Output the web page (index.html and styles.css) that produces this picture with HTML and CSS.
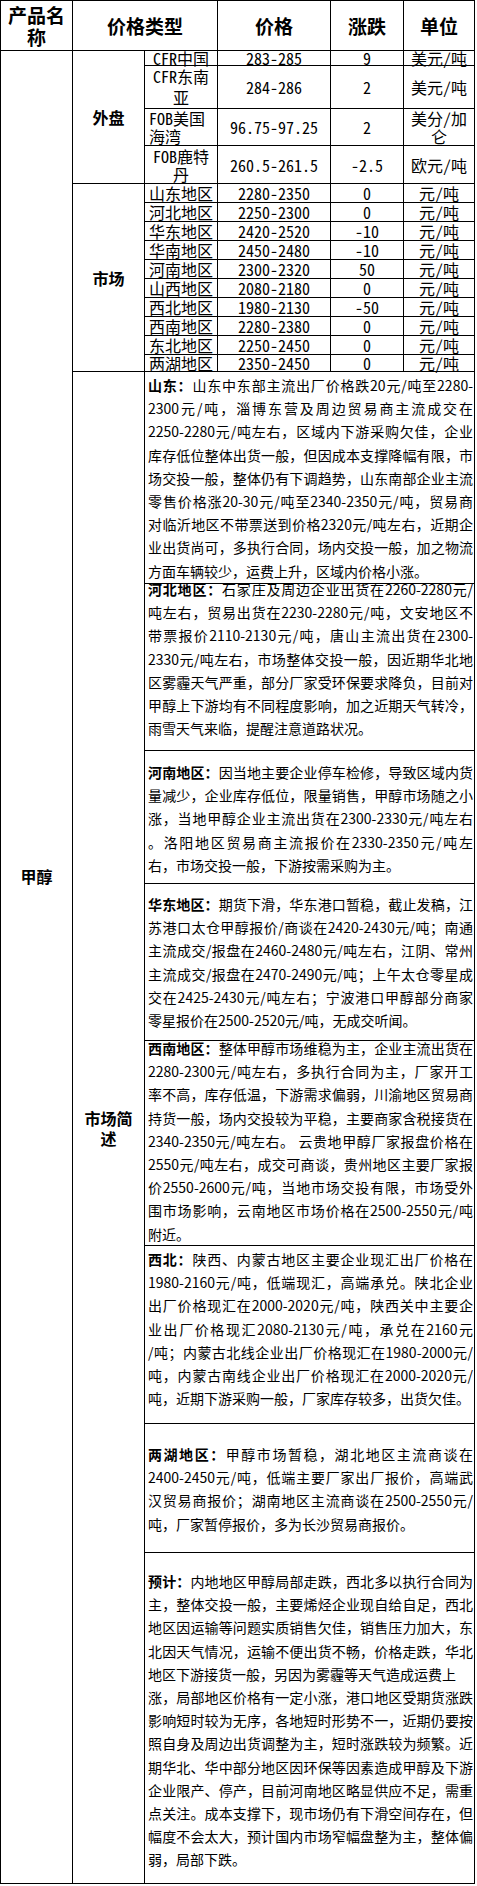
FILE: index.html
```html
<!DOCTYPE html>
<html lang="zh-CN">
<head>
<meta charset="utf-8">
<title>甲醇价格</title>
<link rel="stylesheet" href="styles.css">
</head>
<body>
<table class="grid">
  <colgroup>
    <col class="c1"><col class="c2"><col class="c3"><col class="c4"><col class="c5"><col class="c6">
  </colgroup>
  <tr class="h-head">
    <th>产品名称</th>
    <th colspan="2">价格类型</th>
    <th>价格</th>
    <th>涨跌</th>
    <th>单位</th>
  </tr>
  <tr class="h-r1 tight">
    <td rowspan="22" class="prod">甲醇</td>
    <td rowspan="4" class="lbl">外盘</td>
    <td class="dat">CFR中国</td><td class="dat">283-285</td><td class="dat">9</td><td class="dat">美元/吨</td>
  </tr>
  <tr class="h-r2">
    <td class="dat wide">CFR东南亚</td><td class="dat">284-286</td><td class="dat">2</td><td class="dat">美元/吨</td>
  </tr>
  <tr class="h-r3">
    <td class="dat left">FOB美国海湾</td><td class="dat">96.75-97.25</td><td class="dat">2</td><td class="dat">美分/加仑</td>
  </tr>
  <tr class="h-r4">
    <td class="dat">FOB鹿特丹</td><td class="dat">260.5-261.5</td><td class="dat">-2.5</td><td class="dat">欧元/吨</td>
  </tr>
  <tr class="h-m">
    <td rowspan="10" class="lbl">市场</td>
    <td class="dat">山东地区</td><td class="dat">2280-2350</td><td class="dat">0</td><td class="dat">元/吨</td>
  </tr>
  <tr class="h-m"><td class="dat">河北地区</td><td class="dat">2250-2300</td><td class="dat">0</td><td class="dat">元/吨</td></tr>
  <tr class="h-m"><td class="dat">华东地区</td><td class="dat">2420-2520</td><td class="dat">-10</td><td class="dat">元/吨</td></tr>
  <tr class="h-m"><td class="dat">华南地区</td><td class="dat">2450-2480</td><td class="dat">-10</td><td class="dat">元/吨</td></tr>
  <tr class="h-m"><td class="dat">河南地区</td><td class="dat">2300-2320</td><td class="dat">50</td><td class="dat">元/吨</td></tr>
  <tr class="h-m"><td class="dat">山西地区</td><td class="dat">2080-2180</td><td class="dat">0</td><td class="dat">元/吨</td></tr>
  <tr class="h-m"><td class="dat">西北地区</td><td class="dat">1980-2130</td><td class="dat">-50</td><td class="dat">元/吨</td></tr>
  <tr class="h-m"><td class="dat">西南地区</td><td class="dat">2280-2380</td><td class="dat">0</td><td class="dat">元/吨</td></tr>
  <tr class="h-m"><td class="dat">东北地区</td><td class="dat">2250-2450</td><td class="dat">0</td><td class="dat">元/吨</td></tr>
  <tr class="h-mlast"><td class="dat">两湖地区</td><td class="dat">2350-2450</td><td class="dat">0</td><td class="dat">元/吨</td></tr>

  <tr class="h-sd">
    <td rowspan="8" class="lbl">市场简述</td>
    <td colspan="4" class="note n-sd"><p class="para">
      <span class="ln"><b>山东：</b>山东中东部主流出厂价格跌20元/吨至2280-</span>
      <span class="ln">2300元/吨，淄博东营及周边贸易商主流成交在</span>
      <span class="ln">2250-2280元/吨左右，区域内下游采购欠佳，企业</span>
      <span class="ln">库存低位整体出货一般，但因成本支撑降幅有限，市</span>
      <span class="ln">场交投一般，整体仍有下调趋势，山东南部企业主流</span>
      <span class="ln">零售价格涨20-30元/吨至2340-2350元/吨，贸易商</span>
      <span class="ln">对临沂地区不带票送到价格2320元/吨左右，近期企</span>
      <span class="ln">业出货尚可，多执行合同，场内交投一般，加之物流</span>
      <span class="ln end">方面车辆较少，运费上升，区域内价格小涨。</span>
    </p></td>
  </tr>
  <tr class="h-hb">
    <td colspan="4" class="note n-hb"><p class="para">
      <span class="ln"><b>河北地区：</b>石家庄及周边企业出货在2260-2280元/</span>
      <span class="ln">吨左右，贸易出货在2230-2280元/吨，文安地区不</span>
      <span class="ln">带票报价2110-2130元/吨，唐山主流出货在2300-</span>
      <span class="ln">2330元/吨左右，市场整体交投一般，因近期华北地</span>
      <span class="ln">区雾霾天气严重，部分厂家受环保要求降负，目前对</span>
      <span class="ln">甲醇上下游均有不同程度影响，加之近期天气转冷，</span>
      <span class="ln end">雨雪天气来临，提醒注意道路状况。</span>
    </p></td>
  </tr>
  <tr class="h-hn">
    <td colspan="4" class="note n-hn"><p class="para">
      <span class="ln"><b>河南地区：</b>因当地主要企业停车检修，导致区域内货</span>
      <span class="ln">量减少，企业库存低位，限量销售，甲醇市场随之小</span>
      <span class="ln">涨，当地甲醇企业主流出货在2300-2330元/吨左右</span>
      <span class="ln">。洛阳地区贸易商主流报价在2330-2350元/吨左</span>
      <span class="ln end">右，市场交投一般，下游按需采购为主。</span>
    </p></td>
  </tr>
  <tr class="h-hd">
    <td colspan="4" class="note n-hd"><p class="para">
      <span class="ln"><b>华东地区：</b>期货下滑，华东港口暂稳，截止发稿，江</span>
      <span class="ln">苏港口太仓甲醇报价/商谈在2420-2430元/吨；南通</span>
      <span class="ln">主流成交/报盘在2460-2480元/吨左右，江阴、常州</span>
      <span class="ln">主流成交/报盘在2470-2490元/吨；上午太仓零星成</span>
      <span class="ln">交在2425-2430元/吨左右；宁波港口甲醇部分商家</span>
      <span class="ln end">零星报价在2500-2520元/吨，无成交听闻。</span>
    </p></td>
  </tr>
  <tr class="h-xn">
    <td colspan="4" class="note n-xn"><p class="para">
      <span class="ln"><b>西南地区：</b>整体甲醇市场维稳为主，企业主流出货在</span>
      <span class="ln">2280-2300元/吨左右，多执行合同为主，厂家开工</span>
      <span class="ln">率不高，库存低温，下游需求偏弱，川渝地区贸易商</span>
      <span class="ln">持货一般，场内交投较为平稳，主要商家含税接货在</span>
      <span class="ln">2340-2350元/吨左右。 云贵地甲醇厂家报盘价格在</span>
      <span class="ln">2550元/吨左右，成交可商谈，贵州地区主要厂家报</span>
      <span class="ln">价2550-2600元/吨，当地市场交投有限，市场受外</span>
      <span class="ln">围市场影响，云南地区市场价格在2500-2550元/吨</span>
      <span class="ln end">附近。</span>
    </p></td>
  </tr>
  <tr class="h-xb">
    <td colspan="4" class="note n-xb"><p class="para">
      <span class="ln"><b>西北：</b>陕西、内蒙古地区主要企业现汇出厂价格在</span>
      <span class="ln">1980-2160元/吨，低端现汇，高端承兑。陕北企业</span>
      <span class="ln">出厂价格现汇在2000-2020元/吨，陕西关中主要企</span>
      <span class="ln">业出厂价格现汇2080-2130元/吨，承兑在2160元</span>
      <span class="ln">/吨；内蒙古北线企业出厂价格现汇在1980-2000元/</span>
      <span class="ln">吨，内蒙古南线企业出厂价格现汇在2000-2020元/</span>
      <span class="ln end">吨，近期下游采购一般，厂家库存较多，出货欠佳。</span>
    </p></td>
  </tr>
  <tr class="h-lh">
    <td colspan="4" class="note n-lh"><p class="para">
      <span class="ln"><b>两湖地区：</b>甲醇市场暂稳，湖北地区主流商谈在</span>
      <span class="ln">2400-2450元/吨，低端主要厂家出厂报价，高端武</span>
      <span class="ln">汉贸易商报价；湖南地区主流商谈在2500-2550元/</span>
      <span class="ln end">吨，厂家暂停报价，多为长沙贸易商报价。</span>
    </p></td>
  </tr>
  <tr class="h-yj">
    <td colspan="4" class="note n-yj"><p class="para">
      <span class="ln"><b>预计：</b>内地地区甲醇局部走跌，西北多以执行合同为</span>
      <span class="ln">主，整体交投一般，主要烯烃企业现自给自足，西北</span>
      <span class="ln">地区因运输等问题实质销售欠佳，销售压力加大，东</span>
      <span class="ln">北因天气情况，运输不便出货不畅，价格走跌，华北</span>
      <span class="ln end">地区下游接货一般，另因为雾霾等天气造成运费上</span>
      <span class="ln">涨，局部地区价格有一定小涨，港口地区受期货涨跌</span>
      <span class="ln">影响短时较为无序，各地短时形势不一，近期仍要按</span>
      <span class="ln">照自身及周边出货调整为主，短时涨跌较为频繁。近</span>
      <span class="ln">期华北、华中部分地区因环保等因素造成甲醇及下游</span>
      <span class="ln">企业限产、停产，目前河南地区略显供应不足，需重</span>
      <span class="ln">点关注。成本支撑下，现市场仍有下滑空间存在，但</span>
      <span class="ln">幅度不会太大，预计国内市场窄幅盘整为主，整体偏</span>
      <span class="ln end">弱，局部下跌。</span>
    </p></td>
  </tr>
</table>
</body>
</html>
```

FILE: styles.css
```css
html, body {
  margin: 0;
  padding: 0;
  background: #fff;
}

body {
  font-family: "Noto Sans CJK SC", "Noto Sans", sans-serif;
  color: #000;
}

.grid {
  border-collapse: separate;
  border-spacing: 0;
  table-layout: fixed;
  width: 475px;
  border-top: 1px solid #000;
  border-left: 1px solid #000;
}

.grid th,
.grid td {
  border-right: 1px solid #000;
  border-bottom: 1px solid #000;
  padding: 0;
}

.c1 { width: 72px; }
.c2 { width: 72px; }
.c3 { width: 73px; }
.c4 { width: 113px; }
.c5 { width: 73px; }
.c6 { width: 71px; }

/* row heights */
.h-head { height: 50px; }
.h-r1 { height: 15px; }
.h-r2 { height: 43px; }
.h-r3 { height: 37px; }
.h-r4 { height: 38px; }
.h-m { height: 19px; }
.h-mlast { height: 17px; }
.h-sd { height: 212px; }
.h-hb { height: 167px; }
.h-hn { height: 133px; }
.h-hd { height: 157px; }
.h-xn { height: 205px; }
.h-xb { height: 178px; }
.h-lh { height: 129px; }
.h-yj { height: 331px; }

/* header */
.grid th {
  font-size: 19px;
  font-weight: 700;
  line-height: 22px;
  text-align: center;
  vertical-align: middle;
}

/* product & group labels */
.prod {
  font-size: 16px;
  font-weight: 700;
  line-height: 20px;
  text-align: center;
  vertical-align: middle;
  padding-bottom: 183px !important;
}

.lbl {
  font-size: 16px;
  font-weight: 700;
  line-height: 20px;
  text-align: center;
  vertical-align: middle;
  padding: 0 5px !important;
}

/* price data cells */
.dat {
  font-family: "Noto Sans Mono CJK SC", "Noto Sans CJK SC", monospace;
  font-size: 16px;
  line-height: 18px;
  text-align: center;
  vertical-align: middle;
  padding: 0 2px !important;
}

.dat.left {
  text-align: left;
  padding-left: 4px !important;
}

.dat.wide { line-height: 21px; }

.tight .dat { line-height: 14px; }
.h-mlast .dat { line-height: 16px; }

/* narrative cells */
.note {
  vertical-align: top;
  padding: 0 1px 0 3px !important;
  font-size: 14px;
  line-height: 23.2px;
}

.para {
  margin: 0;
}

.ln {
  display: block;
  white-space: nowrap;
  text-align: justify;
  text-align-last: justify;
}

.ln.end {
  text-align-last: left;
}

.ln b {
  font-weight: 700;
}

.n-sd .para { margin-top: 2px; }
.n-hb .para { margin-top: -6px; }
.n-hn .para { margin-top: 10px; }
.n-hd .para { margin-top: 9px; }
.n-xn .para { margin-top: -4px; margin-bottom: -2px; }
.n-xb .para { margin-top: 2px; }
.n-lh .para { margin-top: 19px; }
.n-yj .para { margin-top: 17px; }
```
